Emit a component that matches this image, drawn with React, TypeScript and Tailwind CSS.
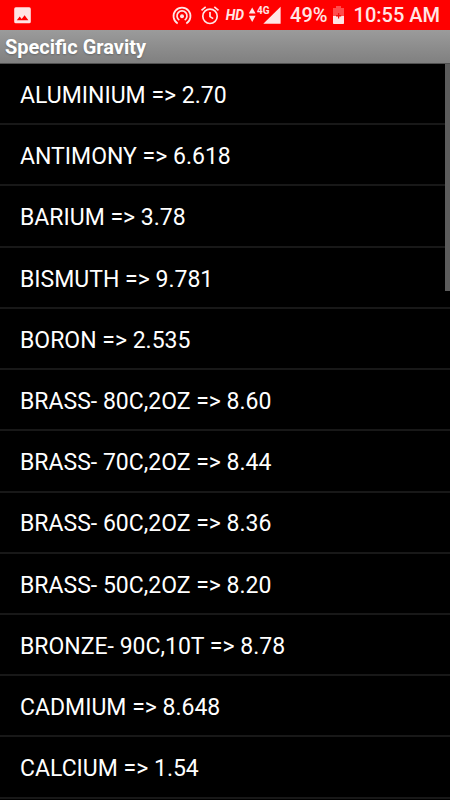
type Material = { name: string; gravity: string };

const materials: Material[] = [
    { name: "ALUMINIUM", gravity: "2.70" },
    { name: "ANTIMONY", gravity: "6.618" },
    { name: "BARIUM", gravity: "3.78" },
    { name: "BISMUTH", gravity: "9.781" },
    { name: "BORON", gravity: "2.535" },
    { name: "BRASS- 80C,2OZ", gravity: "8.60" },
    { name: "BRASS- 70C,2OZ", gravity: "8.44" },
    { name: "BRASS- 60C,2OZ", gravity: "8.36" },
    { name: "BRASS- 50C,2OZ", gravity: "8.20" },
    { name: "BRONZE- 90C,10T", gravity: "8.78" },
    { name: "CADMIUM", gravity: "8.648" },
    { name: "CALCIUM", gravity: "1.54" },
];

const PictureIcon = () => (
    <svg className="ml-3.5 h-[17px] w-[17px]" viewBox="0 0 17 17">
        <path fill="#ffe5e5" fillRule="evenodd" d="M1.8 0.3h13.4a1.6 1.6 0 0 1 1.6 1.6v12.8a1.6 1.6 0 0 1-1.6 1.6H1.8a1.6 1.6 0 0 1-1.6-1.6V1.9A1.6 1.6 0 0 1 1.8 0.3zM2.8 13.3h11.6L10.6 8.2l-2.9 3.7-2-2.4z" />
    </svg>
);

const HotspotIcon = () => (
    <svg className="h-5 w-5" viewBox="0 0 20 20" fill="none" stroke="#ffe5e5" strokeWidth="1.7">
        <path d="M5.7 18.4A8.5 8.5 0 1 1 14.3 18.4" />
        <path d="M7.3 15.1A5 5 0 1 1 12.7 15.1" />
        <circle cx="10" cy="11.3" r="2" fill="#ffe5e5" stroke="none" />
    </svg>
);

const AlarmIcon = () => (
    <svg className="ml-2 h-5 w-5" viewBox="0 0 20 20" fill="none" stroke="#ffe5e5" strokeWidth="1.7">
        <circle cx="10" cy="11.3" r="7.2" />
        <path d="M10 7v4.6l3.2 2M1.5 5.4L5.7 1.9M18.5 5.4l-4.2-3.5" />
    </svg>
);

const SignalIcon = () => (
    <svg className="ml-1 h-5 w-[33px]" viewBox="0 0 33 20" fill="#ffe5e5">
        <path d="M0.8 8.6L4.2 2.4L7.6 8.6zM0.8 10.8L4.2 17L7.6 10.8z" />
        <path d="M32.6 1.8V18.8H15.3z" />
        <text x="9" y="9.2" fontSize="10.5" fontWeight="700" textLength="12.5" lengthAdjust="spacingAndGlyphs" fontFamily="Roboto, sans-serif" stroke="#ff0000" strokeWidth="1.2" paintOrder="stroke">4G</text>
    </svg>
);

const BatteryIcon = () => (
    <svg className="ml-[5px] h-[18px] w-[11px]" viewBox="0 0 11 18">
        <path fill="#ff4d4d" d="M3 0h5v2h3v8H0V2h3z" />
        <path fill="#ffe5e5" d="M0 10h11v7.2q0 .8-.8.8H.8q-.8 0-.8-.8z" />
        <path fill="#f01010" d="M5 7h1.2v2h2v1.5h-2v2H5v-2H3V9h2z" />
    </svg>
);

const StatusBar = () => (
    <div className="flex h-[30px] shrink-0 items-center bg-[#ff0000] text-[#ffe5e5]">
        <PictureIcon />
        <div className="ml-auto flex items-center pr-[10px]">
            <HotspotIcon />
            <AlarmIcon />
            <span className="ml-[6px] text-[14px] leading-5 font-bold italic">HD</span>
            <SignalIcon />
            <span className="ml-[9px] text-[20px] leading-[30px] font-medium">49%</span>
            <BatteryIcon />
            <span className="ml-2.5 text-[20px] leading-[30px] font-medium">10:55 AM</span>
        </div>
    </div>
);

const MaterialRow = ({ name, gravity }: Material) => (
    <li className="flex h-[61.22px] items-center border-b-2 border-[#181818] pt-[5px] pl-5 text-[23px] whitespace-pre text-white">
        {name} {"=>"} {gravity}
    </li>
);

export default function App() {
    return (
        <div className="flex h-[800px] w-[450px] flex-col overflow-hidden bg-black font-[Roboto,sans-serif]">
            <StatusBar />
            <h1 className="h-[34px] shrink-0 border-b border-[#505050] bg-linear-to-b from-[#9b9b9b] to-[#808080] pl-[5px] text-[20px] leading-[34px] font-bold text-white [text-shadow:0_1px_2px_#00000040]">
                Specific Gravity
            </h1>
            <div className="relative min-h-0 flex-1">
                <ul>
                    {materials.map((material) => (
                        <MaterialRow key={material.name} {...material} />
                    ))}
                </ul>
                <div className="absolute top-0 right-0 h-[227px] w-[5px] bg-[#5c5c5c]" />
            </div>
        </div>
    );
}
